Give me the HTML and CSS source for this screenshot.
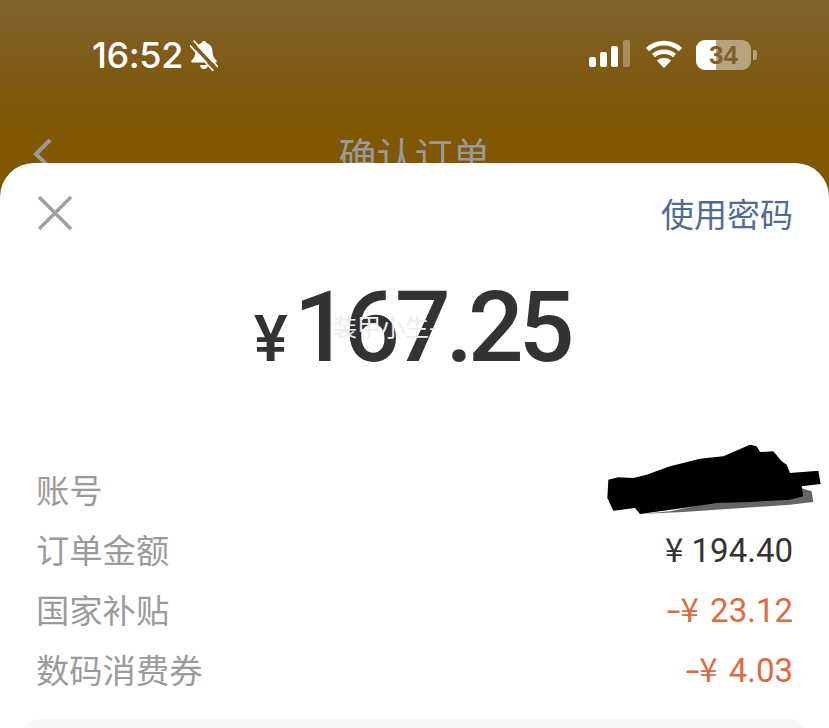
FILE: index.html
```html
<!DOCTYPE html>
<html lang="zh-CN">
<head>
<meta charset="utf-8">
<title>确认订单</title>
<link rel="stylesheet" href="styles.css">
</head>
<body>
<div class="page">
  <header class="top">
    <div class="status">
      <div class="status-left">
        <span class="time">16:52</span>
        <svg class="bell" width="28" height="31" viewBox="0 0 28 31"><path fill="#fff" d="M14 1c1.300 0 2.200.9 2.400 2 4 1.100 5.800 4.300 6.100 8.200.3 4 1 6.500 3.900 9.300.8.900.3 2-.9 2H2.500c-1.200 0-1.700-1.100-.9-2 2.900-2.800 3.600-5.300 3.900-9.300.3-3.900 2.100-7.100 6.100-8.200C11.800 1.900 12.700 1 14 1zM10 25h8c-.2 2.400-1.900 4-4 4s-3.800-1.600-4-4z"/><path stroke="#7f5d1a" stroke-width="3.600" d="M2 3.500l24 25.500"/><path stroke="#fff" stroke-width="1.600" stroke-linecap="round" d="M4 1l24 26M0 5.500l23 25"/></svg>
      </div>
      <div class="status-right">
        <svg class="signal" width="43" height="28" viewBox="0 0 43 28"><g fill="#fff"><rect x="1" y="17" width="7" height="10" rx="2"/><rect x="12" y="12" width="7" height="15" rx="2"/><rect x="23" y="6" width="7" height="21" rx="2"/></g><rect x="35" y="0" width="7" height="27" rx="2" fill="#fff" fill-opacity=".3"/></svg>
        <svg class="wifi" width="38" height="30" viewBox="0 0 38 30"><path fill="none" stroke="#fff" stroke-width="4.600" d="M2.500 10.500c9.500-8.500 23.500-8.500 33 0M8.500 16.500c6-5 15-5 21 0"/><path fill="#fff" d="M19 29l-7.300-7.500c4-3.300 10.600-3.300 14.600 0z"/></svg>
        <div class="battery">
          <div class="battery-body"><span class="battery-fill"></span><span class="battery-num">34</span></div>
          <span class="battery-tip"></span>
        </div>
      </div>
    </div>
    <nav class="nav">
      <svg class="back" width="20" height="32" viewBox="0 0 20 32"><path fill="none" stroke="#9a9a9a" stroke-width="4" d="M18 2L4 16l14 14"/></svg>
      <span class="nav-title">确认订单</span>
    </nav>
  </header>
  <main class="sheet">
    <div class="sheet-head">
      <svg class="close" width="36" height="36" viewBox="0 0 36 36"><path stroke="#9f9f9f" stroke-width="3.500" d="M2 2l32 32M34 2L2 34"/></svg>
      <a class="use-pwd">使用密码</a>
    </div>
    <div class="amount">
      <span class="cur">¥</span><span class="num">167.25</span>
      <span class="watermark">装甲小生-</span>
    </div>
    <dl class="rows">
      <div class="row">
        <dt>账号</dt>
        <dd class="masked">
          <svg class="scribble" width="239" height="100" viewBox="0 0 717 300"><path fill="#000" fill-opacity=".6" d="M150 258l90-8 120-25 230-15 25-35 50 15 5 32-70 8-200 14-120 8z"/><path fill="#000" d="M55 155l30-7 45 2 40-10 70-25 90-23 70-7 80-35 20 5 10 17 40-2 25 30 15 10 10 25 85-7 7 40-57 7 5 30-40 10-120 7-100 3-100 15-130 18-15-18-65 8-18-38z"/></svg>
        </dd>
      </div>
      <div class="row"><dt>订单金额</dt><dd class="dark"><span class="y">¥</span> 194.40</dd></div>
      <div class="row"><dt>国家补贴</dt><dd class="minus"><span class="dash">-</span><span class="y">¥</span> 23.12</dd></div>
      <div class="row"><dt>数码消费券</dt><dd class="minus"><span class="dash">-</span><span class="y">¥</span> 4.03</dd></div>
    </dl>
    <div class="card"></div>
  </main>
</div>
</body>
</html>
```
FILE: styles.css
```css
* { box-sizing: border-box; margin: 0; padding: 0; }
html, body { height: 100%; overflow: hidden; background: #fff; }
body { font-family: "Liberation Sans", "Noto Sans CJK SC", sans-serif; }
.page { width: 829px; height: 728px; overflow: hidden; display: flex; flex-direction: column; background: #7f5705; }

.top {
  height: 163px; flex: none; overflow: hidden;
  background: linear-gradient(#80622f 0, #7f5a14 70px, #7f5705 125px, #7f5705 100%);
}
.status { display: flex; justify-content: space-between; align-items: center; height: 56px; margin-top: 27px; padding: 0 72px 0 92px; }
.status-left { display: flex; align-items: center; gap: 7px; }
.time { font: 500 36px/1 Inter, sans-serif; color: #fff; letter-spacing: -.4px; }
.status-right { display: flex; align-items: center; gap: 13px; }
.signal { margin-top: -2px; margin-right: 1px; }
.wifi { margin-top: -3px; }
.battery { display: flex; align-items: center; gap: 2px; }
.battery-body { position: relative; width: 55px; height: 30px; border-radius: 9px; overflow: hidden; background: #b7a47f; text-align: center; }
.battery-fill { position: absolute; left: 0; top: 0; bottom: 0; width: 20px; background: #fff; }
.battery-num { position: relative; font: 700 26px/30px "Liberation Sans", sans-serif; color: #7e6129; }
.battery-tip { width: 4px; height: 10px; border-radius: 0 3px 3px 0; background: #b7a47f; }

.nav { margin-top: 41px; height: 60px; padding-left: 32px; display: flex; align-items: center; }
.nav-title { flex: 1; margin-left: -52px; text-align: center; font: 400 38px/1 "Noto Sans CJK SC", sans-serif; color: #9a9a9a; }

.sheet { flex: 1; background: #fff; border-radius: 34px 34px 0 0; display: flex; flex-direction: column; }
.sheet-head { display: flex; justify-content: space-between; align-items: center; padding: 32px 36px 0 37px; height: 68px; }
.use-pwd { font: 400 33px/1 "Noto Sans CJK SC", sans-serif; color: #4f6d92; }

.amount { position: relative; display: flex; align-items: baseline; justify-content: center; height: 120px; margin-top: 37px; padding-right: 8px; color: #333; }
.cur { font: 500 64px/120px Roboto, "Noto Sans CJK SC", sans-serif; margin-right: 6px; margin-left: 2px; }
.num { font: 500 98px/120px Roboto, sans-serif; letter-spacing: -5px; }
.watermark { position: absolute; left: 333px; top: 46px; font: 400 24px/1 "Noto Sans CJK SC", sans-serif; color: #eee; }

.rows { margin-top: 71px; padding: 0 36px; }
.row { position: relative; display: flex; justify-content: space-between; align-items: center; height: 60px; }
dt { font: 400 33.300px/1 "Noto Sans CJK SC", sans-serif; color: #9b9b9b; }
dd { font: 400 33px/1 Roboto, sans-serif; }
.dark { color: #333; }
.minus { color: #e0693f; }
.y { font-family: "Noto Sans CJK SC", sans-serif; }
.minus .y { margin-right: 3px; }
.dash { display: inline-block; margin: 0 2px; transform: scaleX(1.500); }
.scribble { position: absolute; right: -36px; top: -31px; }

.card { margin: 20px 22px 0; height: 60px; background: #f8f8f9; border-radius: 18px; flex: none; }
```
